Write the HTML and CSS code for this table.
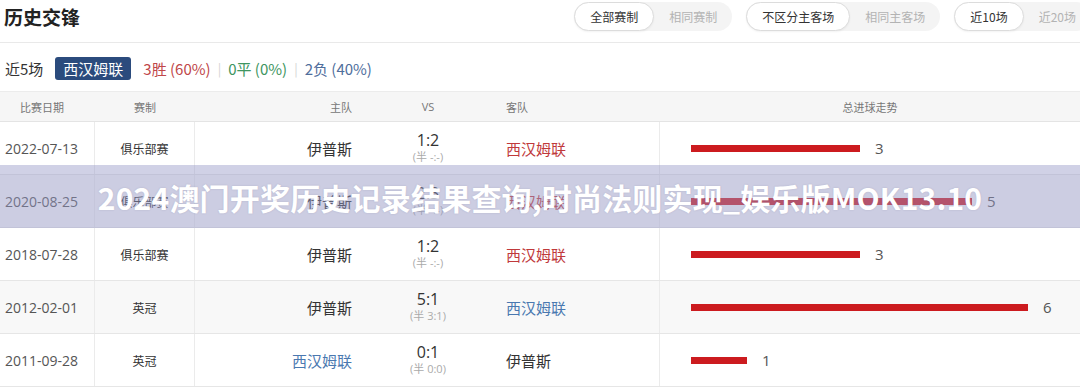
FILE: index.html
```html
<!DOCTYPE html>
<html lang="zh-CN">
<head>
<meta charset="utf-8">
<title>历史交锋</title>
<link rel="stylesheet" href="styles.css">
</head>
<body>
<div class="page">
  <header class="topbar">
    <h2 class="title">历史交锋</h2>
    <div class="filters">
      <div class="seg"><span class="opt active">全部赛制</span><span class="opt">相同赛制</span></div>
      <div class="seg"><span class="opt active">不区分主客场</span><span class="opt">相同主客场</span></div>
      <div class="seg"><span class="opt active">近10场</span><span class="opt">近20场</span></div>
    </div>
  </header>

  <div class="summary">
    <span class="recent">近5场</span>
    <span class="team-badge">西汉姆联</span>
    <span class="win">3胜 (60%)</span>
    <span class="sep">|</span>
    <span class="draw">0平 (0%)</span>
    <span class="sep">|</span>
    <span class="loss">2负 (40%)</span>
  </div>

  <div class="table">
    <div class="thead">
      <div class="c-date">比赛日期</div>
      <div class="c-type">赛制</div>
      <div class="c-home">主队</div>
      <div class="c-vs">VS</div>
      <div class="c-away">客队</div>
      <div class="c-trend">总进球走势</div>
    </div>

    <div class="trow">
      <div class="c-date">2022-07-13</div>
      <div class="c-type">俱乐部赛</div>
      <div class="c-home">伊普斯</div>
      <div class="c-vs"><span class="score">1:2</span><span class="half">(半 -:-)</span></div>
      <div class="c-away team-win">西汉姆联</div>
      <div class="c-trend"><span class="bar" style="width:169px"></span><span class="goals">3</span></div>
    </div>

    <div class="trow alt">
      <div class="c-date">2020-08-25</div>
      <div class="c-type">俱乐部赛</div>
      <div class="c-home">伊普斯</div>
      <div class="c-vs"><span class="score">2:3</span><span class="half">(半 -:-)</span></div>
      <div class="c-away team-win">西汉姆联</div>
      <div class="c-trend"><span class="bar" style="width:281px"></span><span class="goals">5</span></div>
    </div>

    <div class="trow">
      <div class="c-date">2018-07-28</div>
      <div class="c-type">俱乐部赛</div>
      <div class="c-home">伊普斯</div>
      <div class="c-vs"><span class="score">1:2</span><span class="half">(半 -:-)</span></div>
      <div class="c-away team-win">西汉姆联</div>
      <div class="c-trend"><span class="bar" style="width:169px"></span><span class="goals">3</span></div>
    </div>

    <div class="trow alt">
      <div class="c-date">2012-02-01</div>
      <div class="c-type">英冠</div>
      <div class="c-home">伊普斯</div>
      <div class="c-vs"><span class="score">5:1</span><span class="half">(半 3:1)</span></div>
      <div class="c-away team-loss">西汉姆联</div>
      <div class="c-trend"><span class="bar" style="width:337px"></span><span class="goals">6</span></div>
    </div>

    <div class="trow">
      <div class="c-date">2011-09-28</div>
      <div class="c-type">英冠</div>
      <div class="c-home team-loss">西汉姆联</div>
      <div class="c-vs"><span class="score">0:1</span><span class="half">(半 0:0)</span></div>
      <div class="c-away">伊普斯</div>
      <div class="c-trend"><span class="bar" style="width:56px"></span><span class="goals">1</span></div>
    </div>
  </div>

  <div class="overlay">2024澳门开奖历史记录结果查询,时尚法则实现_娱乐版MOK13.10</div>
</div>
</body>
</html>
```

FILE: styles.css
```css
* { box-sizing: border-box; }

html, body {
  margin: 0;
  padding: 0;
  background: #fff;
  overflow: hidden;
}

body {
  font-family: "Open Sans", "Noto Sans CJK SC", sans-serif;
  color: #333;
}

.page {
  position: relative;
  width: 1080px;
  height: 391px;
  overflow: hidden;
}

/* ---------- top bar ---------- */
.topbar {
  display: flex;
  align-items: flex-start;
  height: 43px;
  border-bottom: 1px solid #e9e9e9;
}

.title {
  flex: 1;
  margin: 0;
  padding-left: 4px;
  font-family: "Noto Sans CJK SC", sans-serif;
  font-size: 19px;
  font-weight: 700;
  line-height: 34px;
  color: #222;
}

.filters {
  display: flex;
  gap: 14px;
  margin-top: 2px;
  margin-right: -11px;
  flex-shrink: 0;
}

.seg {
  display: flex;
  height: 29px;
  background: #f4f4f4;
  border-radius: 15px;
}

.opt {
  padding: 0 15px;
  font-family: "Noto Sans CJK SC", sans-serif;
  font-size: 12px;
  line-height: 29px;
  color: #b3b3b3;
  white-space: nowrap;
}

.opt.active {
  background: #fff;
  color: #333;
  border: 1px solid #dcdcdc;
  border-radius: 15px;
  line-height: 27px;
  box-shadow: 0 1px 2px rgba(0, 0, 0, 0.05);
}

/* ---------- summary ---------- */
.summary {
  display: flex;
  align-items: center;
  height: 48px;
  padding: 2px 0 0 5px;
  font-size: 15px;
  font-family: "Noto Sans CJK SC", sans-serif;
}

.recent { color: #333; margin-right: 12px; }

.team-badge {
  background: #2b4b7d;
  color: #fff;
  padding: 0 8px;
  line-height: 23px;
  border-radius: 3px;
  margin-right: 12px;
}

.win { color: #c0474a; }
.draw { color: #3e9560; }
.loss { color: #4f6e9c; }

.sep {
  color: #d4d4d4;
  margin: 0 7px;
  font-size: 13px;
}

/* ---------- table ---------- */
.table {
  display: flex;
  flex-direction: column;
}

.thead,
.trow {
  display: grid;
  grid-template-columns: 95px 100px 185px 96px 184px 420px;
}

.thead {
  height: 31px;
  background: #f6f6f6;
  border-top: 1px solid #ececec;
  border-bottom: 1px solid #e4e4e4;
  font-family: "Noto Sans CJK SC", sans-serif;
  font-size: 11px;
  color: #777;
  align-items: center;
}

.thead .c-date { padding-left: 20px; }
.thead .c-type { text-align: center; }
.thead .c-home { text-align: right; padding-right: 28px; }
.thead .c-vs { text-align: center; font-family: "Open Sans", sans-serif; }
.thead .c-away { padding-left: 30px; }
.thead .c-trend { text-align: center; }

.trow {
  height: 53px;
  border-bottom: 1px solid #e6e6e6;
  background: #fff;
}

.trow.alt { background: #f8f8f8; }

.trow > div {
  display: flex;
  align-items: center;
}

.trow .c-date {
  padding-left: 5px;
  font-size: 14px;
  color: #555;
  border-right: 1px solid #ebebeb;
}

.trow .c-type {
  justify-content: center;
  font-family: "Noto Sans CJK SC", sans-serif;
  font-size: 12px;
  color: #333;
  border-right: 1px solid #ebebeb;
}

.trow .c-home {
  justify-content: flex-end;
  padding-right: 28px;
  font-family: "Noto Sans CJK SC", sans-serif;
  font-size: 15px;
  color: #333;
}

.trow .c-vs {
  flex-direction: column;
  justify-content: center;
  padding-bottom: 2px;
}

.score {
  font-size: 16px;
  line-height: 18px;
  color: #333;
}

.half {
  font-family: "Open Sans", "Noto Sans CJK SC", sans-serif;
  font-size: 11px;
  line-height: 15px;
  color: #aaa;
}

.trow .c-away {
  padding-left: 30px;
  font-family: "Noto Sans CJK SC", sans-serif;
  font-size: 15px;
  color: #333;
  border-right: 1px solid #ebebeb;
}

.team-win { color: #c0393b !important; }
.team-loss { color: #4a78b0 !important; }

.trow .c-trend {
  padding-left: 31px;
}

.bar {
  display: block;
  height: 7px;
  background: #cc1b1f;
}

.goals {
  margin-left: 15px;
  font-size: 15px;
  color: #555;
}

/* ---------- overlay banner ---------- */
.overlay {
  position: absolute;
  left: 0;
  top: 165px;
  width: 1080px;
  height: 63px;
  display: flex;
  align-items: center;
  justify-content: center;
  background: rgba(150, 152, 200, 0.45);
  font-family: "Noto Sans CJK SC", sans-serif;
  font-size: 30px;
  font-weight: 700;
  letter-spacing: 0.2px;
  color: #fff;
  text-shadow: 0 0 2px rgba(80, 80, 110, 0.2);
  white-space: nowrap;
}
```
